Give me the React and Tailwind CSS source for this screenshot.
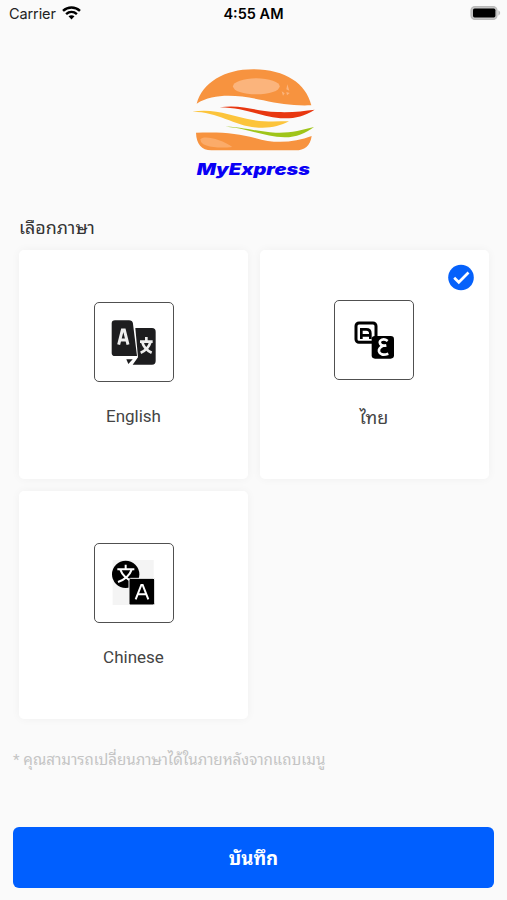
import React, { useState } from "react";

const LANGUAGES = [
  { id: "en", label: "English", Icon: EnglishIcon },
  { id: "th", label: "ไทย", Icon: ThaiIcon },
  { id: "zh", label: "Chinese", Icon: ChineseIcon },
];

function StatusBar() {
  return (
    <div className="grid h-7 grid-cols-3 items-center pl-[9px] pr-[6px] text-[14.5px] leading-none text-[#222]">
      <div className="flex items-center gap-[6px]">
        <span className="tracking-[-0.1px]">Carrier</span>
        <svg width="19" height="14" viewBox="0 0 19 14" fill="none" stroke="#000" strokeWidth="2.5" className="-mt-[2px]">
          <path d="M1 4.9C6 .4 13 .4 18 4.9" />
          <path d="M4.1 8.1C7.3 5.3 11.7 5.3 14.9 8.1" />
          <path d="M6.5 10.3C8.3 8.9 10.7 8.9 12.5 10.3L9.5 13.5Z" fill="#000" stroke="none" />
        </svg>
      </div>
      <span className="pr-[3px] text-center text-[14.5px] font-semibold text-black">4:55 AM</span>
      <svg className="-mt-[2px] justify-self-end" width="31" height="16" viewBox="0 0 31 16">
        <rect x="1" y="1.5" width="26" height="13" rx="4" fill="#c4c4c4" stroke="#b9b9b9" strokeWidth="1.2" />
        <rect x="3" y="3.6" width="22.4" height="8.8" rx="1.6" fill="#000" />
        <path d="M28.4 5.3Q32 8 28.4 10.7Z" fill="#b9b9b9" />
      </svg>
    </div>
  );
}

function Logo() {
  return (
    <svg width="150" height="125" viewBox="0 0 450 375">
      <path d="M50 131C68 68 132 28 220 28C315 28 378 70 394 136C340 138 300 132 250 121C180 106 105 97 50 131Z" fill="#f7933f" />
      <ellipse cx="229" cy="79" rx="70" ry="24" fill="#fbb47c" />
      <path d="M322 73L328 92L319 88ZM305 94L314 100L309 107ZM319 96L329 99L321 106Z" fill="#fbb47c" />
      <path d="M119 142C190 133 222 154 292 156C337 158 371 153 404 149C374 168 347 175 316 175C253 176 207 144 119 142Z" fill="#e83710" />
      <path d="M37 155C104 144 155 168 219 180C260 187 290 184 327 184C300 198 273 205 236 203C167 200 116 155 37 155Z" fill="#fcc43b" />
      <path d="M122 199C190 201 230 215 287 218C330 220 365 210 402 201C376 220 350 232 314 232C250 230 200 203 122 199Z" fill="#9fc51a" />
      <path d="M48 218C125 215 176 220 225 234C285 253 345 247 395 228C391 259 373 271 347 271H94C65 271 49 251 48 218Z" fill="#f7933f" />
      <path d="M62 238C68 224 126 237 157 261C113 266 58 261 62 238Z" fill="#fbab69" />
      <text
        x="50"
        y="345"
        textLength="340"
        lengthAdjust="spacingAndGlyphs"
        fill="#0a00f5"
        className="font-['Inter'] text-[47px] font-black italic"
      >
        MyExpress
      </text>
    </svg>
  );
}

function EnglishIcon() {
  return (
    <svg width="45" height="45" viewBox="0 0 135 135">
      <path d="M73 24H123Q134 24 134 35V123Q134 134 123 134H65L81 112Z" fill="#1d1d1f" />
      <path d="M12 1H54Q64 1 66 11L78 108H12Q2 108 2 98V11Q2 1 12 1Z" fill="#1d1d1f" />
      <path d="M46 118H65L52 132Z" fill="#1d1d1f" />
      <path d="M23 74L34 30H40L51 74M27 60H47" fill="none" stroke="#eee" strokeWidth="9" />
      <path d="M106 51V62M87 65H125M94 67Q100 88 122 98M118 67Q112 88 89 98" fill="none" stroke="#eee" strokeWidth="8" />
    </svg>
  );
}

function ThaiIcon() {
  return (
    <svg width="40" height="38" viewBox="0 0 120 114">
      <rect x="6" y="6" width="60" height="58" rx="9" fill="#fff" stroke="#000" strokeWidth="9" />
      <path d="M22 54V25H37Q49 25 49 37V54M22 43H48" fill="none" stroke="#000" strokeWidth="8" />
      <rect x="53" y="45" width="67" height="68" rx="10" fill="#000" />
      <path d="M101 60Q92 53 84 56Q74 61 79 69Q83 76 97 73M88 74Q73 81 75 91Q79 106 103 98" fill="none" stroke="#fff" strokeWidth="8" />
    </svg>
  );
}

function ChineseIcon() {
  return (
    <svg width="45" height="45" viewBox="0 0 135 135">
      <rect x="5" y="0" width="123" height="135" fill="#f4f4f4" />
      <circle cx="44" cy="43" r="41" fill="#000" />
      <path d="M44 14V26M19 28H70M28 29Q36 52 66 66M62 29Q53 55 21 66" fill="none" stroke="#fff" strokeWidth="6" />
      <rect x="54" y="55" width="77" height="80" rx="5" fill="#000" stroke="#f4f4f4" strokeWidth="3" />
      <path d="M74 118L91 75H95L112 118M80 103H106" fill="none" stroke="#fff" strokeWidth="6" />
    </svg>
  );
}

function LanguageCard({ lang, selected, onSelect }) {
  const { label, Icon } = lang;
  return (
    <button
      type="button"
      onClick={onSelect}
      className={`relative flex h-[228.5px] flex-col items-center rounded-[5px] bg-white shadow-[0_0_10px_rgba(0,0,0,0.045)] ${
        selected ? "pt-[50px] pr-px" : "pt-[52px]"
      }`}
    >
      <span className="flex size-20 items-center justify-center rounded-[5px] border-[1.5px] border-[#505050]">
        <Icon />
      </span>
      <span className={`leading-6 text-[#444] ${selected ? "mt-[26px] text-[18px]" : "mt-[22px] text-[17px]"}`}>
        {label}
      </span>
      {selected && (
        <svg className="absolute right-[15px] top-[14px]" width="26" height="27" viewBox="0 0 26 27">
          <circle cx="13" cy="13.5" r="12.8" fill="#0561fb" />
          <path d="M6.2 13.8L10.8 18.3L20.5 8.5" fill="none" stroke="#fff" strokeWidth="2.7" />
        </svg>
      )}
    </button>
  );
}

function App() {
  const [language, setLanguage] = useState("th");

  return (
    <div className="flex h-[900px] w-full flex-col bg-[#fafafa] font-['Roboto','Noto_Sans_Thai_Looped','Noto_Looped_Thai','Loma','Garuda','Waree','Noto_Serif_Thai','Noto_Sans_Thai',sans-serif]">
      <div className="font-['Inter',sans-serif]">
        <StatusBar />
      </div>
      <div className="mt-8 flex justify-center pl-[3px]">
        <Logo />
      </div>
      <h1 className="ml-[19px] mt-[31px] text-[17.9px] leading-6 text-[#333]">เลือกภาษา</h1>
      <div className="ml-[19px] mr-[18px] mt-[10px] grid grid-cols-2 gap-3">
        {LANGUAGES.map((lang) => (
          <LanguageCard
            key={lang.id}
            lang={lang}
            selected={language === lang.id}
            onSelect={() => setLanguage(lang.id)}
          />
        ))}
      </div>
      <p className="ml-[13px] mt-[29px] text-[15.15px] leading-6 text-[#c4c4c4]">
        * คุณสามารถเปลี่ยนภาษาได้ในภายหลังจากแถบเมนู
      </p>
      <button
        type="button"
        className="mx-[13px] mb-3 mt-auto h-[61px] rounded-[6px] bg-[#005fff] pt-[4px] text-[18.6px] font-bold text-white"
      >
        บันทึก
      </button>
    </div>
  );
}

export default App;
